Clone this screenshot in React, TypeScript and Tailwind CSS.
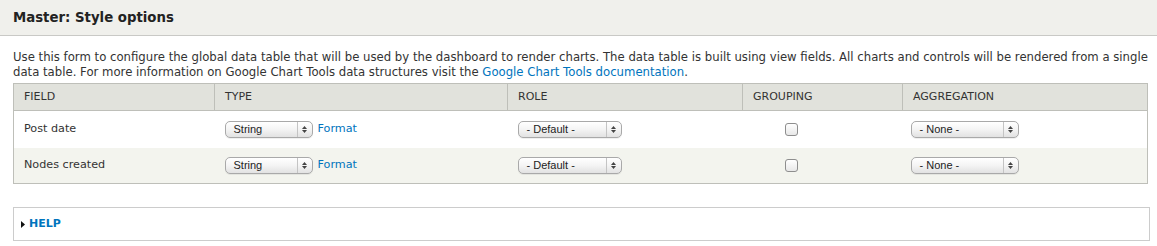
import type { ReactNode } from "react";

/** A fake Mac-style popup select. */
const Select = ({ label, width }: { label: string; width: string }) => (
  <div
    className={`${width} h-[17px] flex items-stretch rounded-[5px] border border-[#a9a9a9] bg-gradient-to-b from-white via-[#f4f4f4] to-[#e2e2e2] shadow-[0_1px_0_rgba(0,0,0,0.06)]`}
  >
    <div className="flex-1 pl-[8px] flex items-center text-[11px] leading-none text-[#222] font-['Liberation_Sans',sans-serif]">
      {label}
    </div>
    <div className="w-[15px] border-l border-[#c4c4c4] flex flex-col items-center justify-center gap-[1px]">
      <svg width="5" height="3" viewBox="0 0 5 3">
        <path d="M2.5 0 L5 3 L0 3 Z" fill="#444" />
      </svg>
      <svg width="5" height="3" viewBox="0 0 5 3">
        <path d="M0 0 L5 0 L2.5 3 Z" fill="#444" />
      </svg>
    </div>
  </div>
);

const Checkbox = () => (
  <div className="w-[13px] h-[13px] rounded-[3px] border border-[#8e8e8e] bg-gradient-to-b from-white to-[#e8e8e8]" />
);

const Link = ({ children }: { children: ReactNode }) => (
  <a href="#" className="text-[#0074bd] no-underline">
    {children}
  </a>
);

const ROWS = ["Post date", "Nodes created"];

const App = () => {
  return (
    <div className="w-[1157px] h-[246px] bg-white text-[#333] font-['DejaVu_Sans',sans-serif] text-[11.2px] overflow-hidden">
      <div className="h-[36px] bg-[#f0f0ec] border-b border-[#c9c9c6] px-[13px] flex items-center">
        <h2 className="text-[13.3px] font-bold text-[#222]">Master: Style options</h2>
      </div>

      <div className="pl-[13px]">
        <p className="mt-[14px] w-[1140px] text-[11.7px] leading-[15px]">
          Use this form to configure the global data table that will be used by
          the dashboard to render charts. The data table is built using view
          fields. All charts and controls will be rendered from a single data
          table. For more information on Google Chart Tools data structures
          visit the <Link>Google Chart Tools documentation</Link>.
        </p>

        <table className="mt-[3px] w-[1135px] border-collapse border border-[#bebfb9] table-fixed">
          <colgroup>
            <col className="w-[201px]" />
            <col className="w-[293px]" />
            <col className="w-[235px]" />
            <col className="w-[160px]" />
            <col />
          </colgroup>
          <thead>
            <tr className="h-[27px] bg-[#e1e2dc] border-b border-[#bebfb9]">
              {["FIELD", "TYPE", "ROLE", "GROUPING", "AGGREGATION"].map((h, i) => (
                <th
                  key={h}
                  className={`px-[10px] text-left font-normal text-[11px] ${i < 4 ? "border-r border-[#bebfb9]" : ""}`}
                >
                  {h}
                </th>
              ))}
            </tr>
          </thead>
          <tbody>
            {ROWS.map((name, i) => (
              <tr
                key={name}
                className={i === 0 ? "h-[37px] bg-white" : "h-[36px] bg-[#f3f4ee]"}
              >
                <td className="px-[10px]">{name}</td>
                <td className="px-[10px]">
                  <div className="flex items-center gap-[5px]">
                    <Select label="String" width="w-[88px]" />
                    <Link>Format</Link>
                  </div>
                </td>
                <td className="px-[10px]">
                  <Select label="- Default -" width="w-[104px]" />
                </td>
                <td className="pl-[42px]">
                  <Checkbox />
                </td>
                <td className="pl-[8px]">
                  <Select label="- None -" width="w-[108px]" />
                </td>
              </tr>
            ))}
          </tbody>
        </table>

        <div className="mt-[23px] w-[1137px] h-[34px] border border-[#cccccc] flex items-center pl-[7px] gap-[4px]">
          <svg width="4" height="7" viewBox="0 0 4 7">
            <path d="M0 0 L4 3.5 L0 7 Z" fill="#111" />
          </svg>
          <Link>
            <span className="text-[11px] font-bold">HELP</span>
          </Link>
        </div>
      </div>
    </div>
  );
};

export default App;
